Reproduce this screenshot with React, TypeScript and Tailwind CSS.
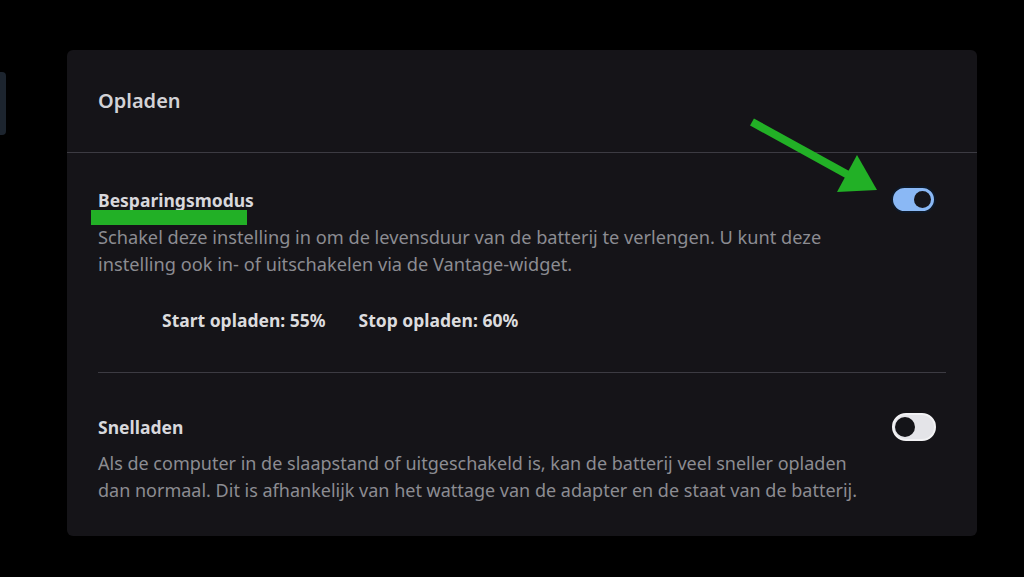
const Toggle = ({ on }: { on: boolean }) => {
  if (on) {
    return (
      <div className="flex h-[27px] w-[45px] items-center justify-end rounded-full border-2 border-[#0e1a2a] bg-[#8ab8f5] px-[3px]">
        <div className="h-[17px] w-[17px] rounded-full bg-[#16161c]" />
      </div>
    );
  }
  return (
    <div className="flex h-[28px] w-[44px] items-center justify-start rounded-full border-2 border-[#f2f2f4] bg-[#e4e4e8] px-[1px]">
      <div className="h-[20px] w-[20px] rounded-full bg-[#141418]" />
    </div>
  );
};

const App = () => {
  return (
    <div
      className="relative flex h-[577px] w-[1024px] overflow-hidden bg-black"
      style={{ fontFamily: '"Noto Sans", "Open Sans", sans-serif' }}
    >
      {/* left edge bar */}
      <div className="pt-[72px]">
        <div className="h-[63px] w-[6px] rounded-r-sm bg-[#1c242e]" />
      </div>

      {/* settings panel */}
      <div className="ml-[61px] mt-[50px] h-[486px] w-[910px] rounded-md bg-[#151418]">
        <div className="flex h-[102px] items-center px-[31px]">
          <h1 className="text-[20px] font-semibold text-[#d2d2d6]">Opladen</h1>
        </div>
        <div className="h-px bg-[#3c3b42]" />

        {/* Besparingsmodus */}
        <div className="px-[31px] pt-[33px]">
          <div className="flex items-center justify-between pr-[10px]">
            <h2 className="relative text-[17.5px] font-bold leading-6 text-[#d8d8dc]">
              Besparingsmodus
              <span className="absolute left-[-7px] top-[22px] h-[15px] w-[156px] bg-[#22b026]" />
            </h2>
            <Toggle on />
          </div>
          <p className="mt-[11px] whitespace-nowrap text-[18.2px] leading-[27px] text-[#8c8c92]">
            Schakel deze instelling in om de levensduur van de batterij te verlengen. U kunt deze
            <br />
            instelling ook in- of uitschakelen via de Vantage-widget.
          </p>
          <div className="mt-[30px] flex gap-[33px] pl-[64px] text-[17.5px] font-bold leading-6 text-[#dcdcde]">
            <span>Start opladen: 55%</span>
            <span>Stop opladen: 60%</span>
          </div>
          <div className="mt-[40px] h-px bg-[#3c3b42]" />
        </div>

        {/* Snelladen */}
        <div className="px-[31px] pt-[40px]">
          <div className="flex items-center justify-between pr-[10px]">
            <h2 className="text-[17.5px] font-bold leading-6 text-[#d8d8dc]">Snelladen</h2>
            <Toggle on={false} />
          </div>
          <p className="mt-[9px] whitespace-nowrap text-[18px] leading-[27px] text-[#8c8c92]">
            Als de computer in de slaapstand of uitgeschakeld is, kan de batterij veel sneller opladen
            <br />
            dan normaal. Dit is afhankelijk van het wattage van de adapter en de staat van de batterij.
          </p>
        </div>
      </div>

      {/* green pointer arrow */}
      <svg className="absolute left-[740px] top-[110px]" width="150" height="95" viewBox="0 0 150 95">
        <line x1="12" y1="12" x2="110" y2="66" stroke="#22b026" strokeWidth="8" />
        <polygon points="117,45 97,82 137,80" fill="#22b026" />
      </svg>
    </div>
  );
};

export default App;
